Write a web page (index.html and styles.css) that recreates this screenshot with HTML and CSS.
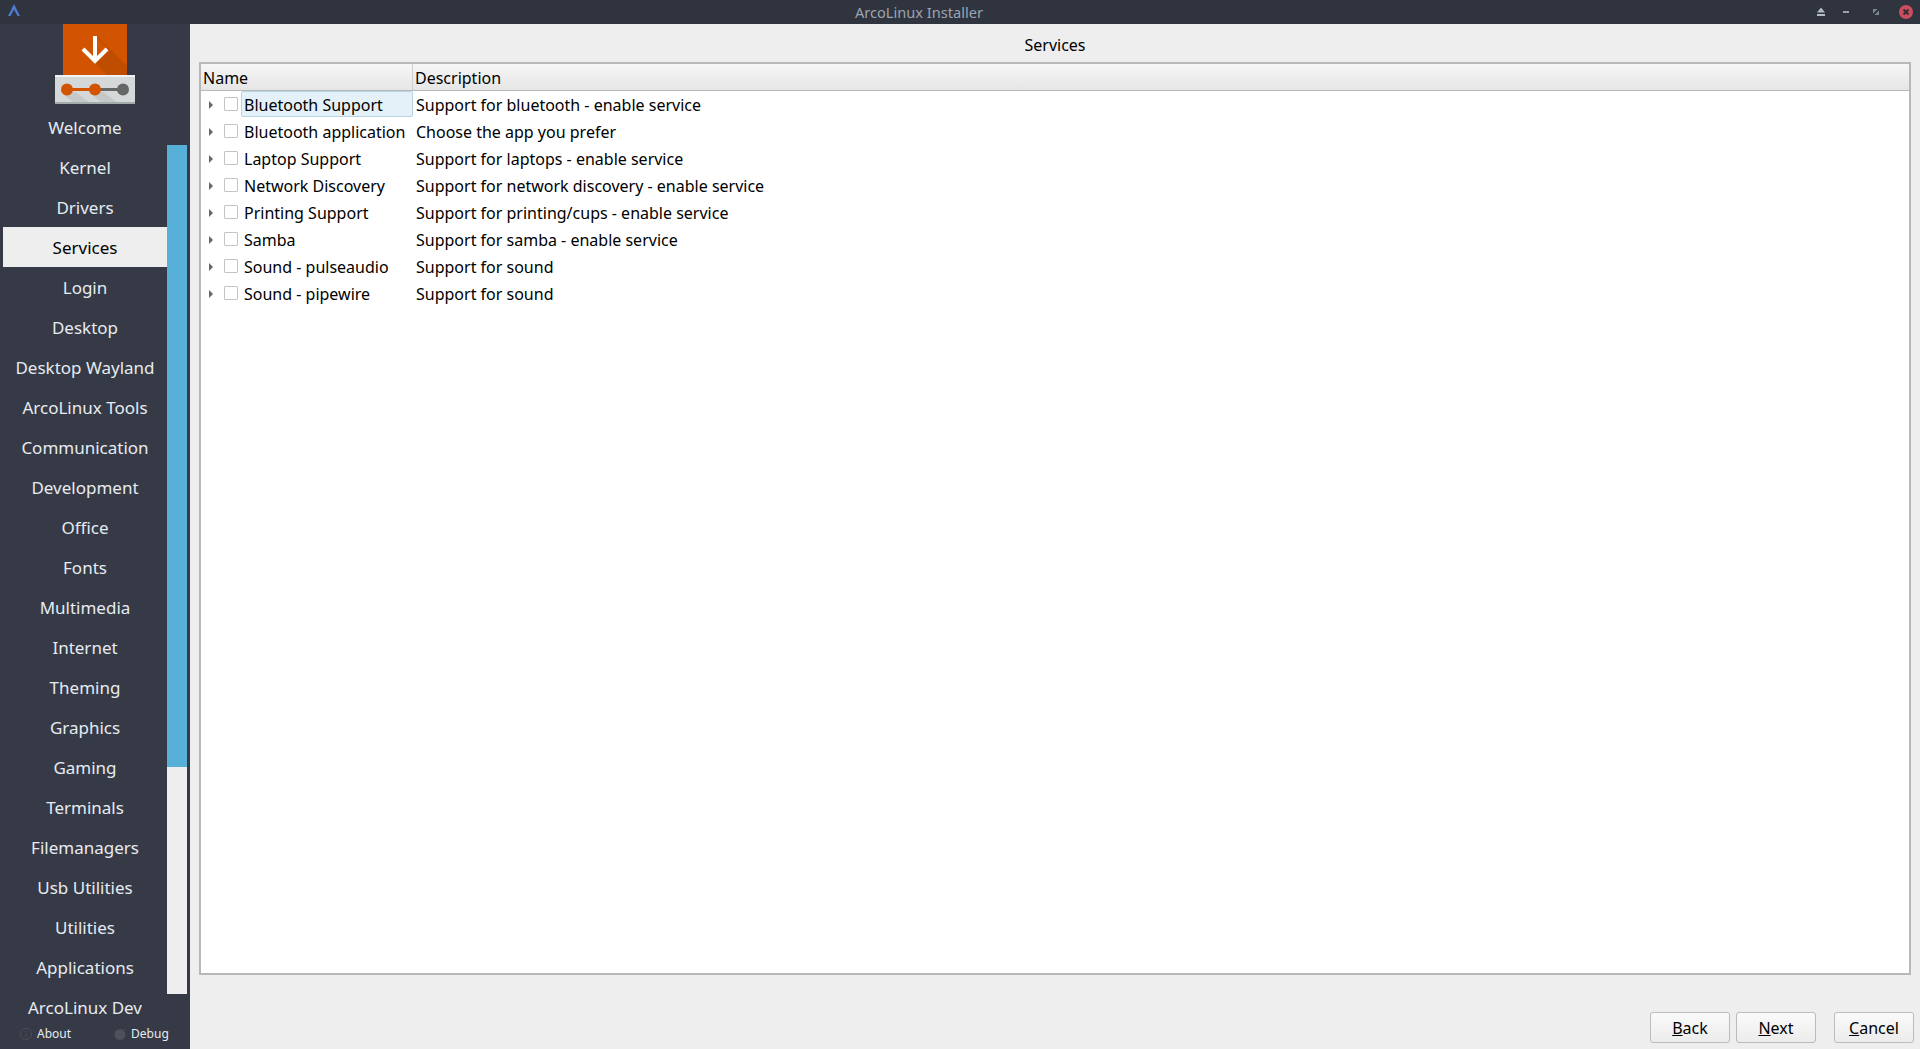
FILE: index.html
```html
<!DOCTYPE html>
<html lang="en">
<head>
<meta charset="utf-8">
<title>ArcoLinux Installer</title>
<link rel="stylesheet" href="styles.css">
</head>
<body>
<div class="app">
  <header class="titlebar">
    <svg class="app-icon" width="14" height="14" viewBox="0 0 14 14"><path d="M7 1 L13 13 H10.500 L7 6.500 L3.500 13 H1 Z" fill="#4f7bd1"/></svg>
    <div class="win-title">ArcoLinux Installer</div>
    <div class="win-controls">
      <svg class="win-btn eject" width="12" height="12" viewBox="0 0 12 12"><path d="M6 1.500 L10 6.500 H2 Z M2 8 H10 V10 H2 Z" fill="#b4bac6"/></svg>
      <svg class="win-btn minim" width="12" height="12" viewBox="0 0 12 12"><rect x="3" y="5" width="6" height="2" fill="#9aa0ad"/></svg>
      <svg class="win-btn maxim" width="12" height="12" viewBox="0 0 12 12"><path d="M3 3 H7.500 L3 7.500 Z M9 4.500 V9 H4.500 Z" fill="#7f8592"/></svg>
      <svg class="win-close" width="14" height="14" viewBox="0 0 14 14"><circle cx="7" cy="7" r="7" fill="#c94f5f"/><path d="M4.500 4.500 L9.500 9.500 M9.500 4.500 L4.500 9.500" stroke="#3a2a33" stroke-width="2"/></svg>
    </div>
  </header>
  <div class="content">
    <aside class="sidebar">
      <div class="sidebar-top">
        <div class="nav-col">
          <div class="logo">
            <svg width="80" height="80" viewBox="0 0 80 80">
              <rect x="8" y="0" width="64" height="51" fill="#d35400"/>
              <path d="M42 12 L72 42 V51 H52 L40 39 L54 26 L42 14 Z" fill="#bf4d00"/>
              <path d="M40 12 V37 M28 25 L40 37 L52 25" fill="none" stroke="#fff" stroke-width="4"/>
              <rect x="0" y="51" width="80" height="29" fill="#d5d8d9"/>
              <path d="M8 70 L18 78 H34 L20 68 Z M36 70 L46 78 H62 L48 68 Z" fill="#c5c8c9"/>
              <rect x="0" y="51" width="80" height="2" fill="#f1f3f3"/>
              <rect x="0" y="78" width="80" height="2" fill="#a2acaa"/>
              <rect x="12" y="64" width="28" height="3" fill="#d35400"/>
              <rect x="40" y="64" width="28" height="3" fill="#666"/>
              <circle cx="12" cy="65.500" r="6" fill="#d35400"/>
              <circle cx="40" cy="65.500" r="6" fill="#d35400"/>
              <circle cx="68" cy="65.500" r="6" fill="#666"/>
            </svg>
          </div>
          <nav class="nav">
            <a class="nav-item">Welcome</a>
            <a class="nav-item">Kernel</a>
            <a class="nav-item">Drivers</a>
            <a class="nav-item active">Services</a>
            <a class="nav-item">Login</a>
            <a class="nav-item">Desktop</a>
            <a class="nav-item">Desktop Wayland</a>
            <a class="nav-item">ArcoLinux Tools</a>
            <a class="nav-item">Communication</a>
            <a class="nav-item">Development</a>
            <a class="nav-item">Office</a>
            <a class="nav-item">Fonts</a>
            <a class="nav-item">Multimedia</a>
            <a class="nav-item">Internet</a>
            <a class="nav-item">Theming</a>
            <a class="nav-item">Graphics</a>
            <a class="nav-item">Gaming</a>
            <a class="nav-item">Terminals</a>
            <a class="nav-item">Filemanagers</a>
            <a class="nav-item">Usb Utilities</a>
            <a class="nav-item">Utilities</a>
            <a class="nav-item">Applications</a>
            <a class="nav-item">ArcoLinux Dev</a>
          </nav>
        </div>
        <div class="scrollbar"><div class="thumb"></div></div>
      </div>
      <div class="side-foot">
        <span class="foot-link">
          <svg width="12" height="12" viewBox="0 0 12 12"><circle cx="6" cy="6" r="5.500" fill="none" stroke="#4a4e59"/><path d="M6 5 V9 M6 3 V4" stroke="#4a4e59"/></svg>
          About
        </span>
        <span class="foot-link debug">
          <svg width="12" height="12" viewBox="0 0 12 12"><circle cx="6" cy="6.500" r="5.500" fill="#4d515b"/><path d="M9 3 L11 1" stroke="#4d515b"/></svg>
          Debug
        </span>
      </div>
    </aside>
    <main class="main">
      <h1 class="page-title">Services</h1>
      <div class="tree">
        <div class="tree-head">
          <div class="col-name head-cell">Name</div>
          <div class="head-cell">Description</div>
        </div>
        <div class="tree-row">
          <span class="arrow"></span><span class="check"></span>
          <span class="name focus">Bluetooth Support</span>
          <span class="desc">Support for bluetooth - enable service</span>
        </div>
        <div class="tree-row">
          <span class="arrow"></span><span class="check"></span>
          <span class="name">Bluetooth application</span>
          <span class="desc">Choose the app you prefer</span>
        </div>
        <div class="tree-row">
          <span class="arrow"></span><span class="check"></span>
          <span class="name">Laptop Support</span>
          <span class="desc">Support for laptops - enable service</span>
        </div>
        <div class="tree-row">
          <span class="arrow"></span><span class="check"></span>
          <span class="name">Network Discovery</span>
          <span class="desc">Support for network discovery - enable service</span>
        </div>
        <div class="tree-row">
          <span class="arrow"></span><span class="check"></span>
          <span class="name">Printing Support</span>
          <span class="desc">Support for printing/cups - enable service</span>
        </div>
        <div class="tree-row">
          <span class="arrow"></span><span class="check"></span>
          <span class="name">Samba</span>
          <span class="desc">Support for samba - enable service</span>
        </div>
        <div class="tree-row">
          <span class="arrow"></span><span class="check"></span>
          <span class="name">Sound - pulseaudio</span>
          <span class="desc">Support for sound</span>
        </div>
        <div class="tree-row">
          <span class="arrow"></span><span class="check"></span>
          <span class="name">Sound - pipewire</span>
          <span class="desc">Support for sound</span>
        </div>
      </div>
      <footer class="actions">
        <button class="btn"><u>B</u>ack</button>
        <button class="btn"><u>N</u>ext</button>
        <button class="btn cancel"><u>C</u>ancel</button>
      </footer>
    </main>
  </div>
</div>
</body>
</html>
```
FILE: styles.css
```css
* { box-sizing: border-box; }
html, body { margin: 0; padding: 0; height: 100%; overflow: hidden; }
body { font-family: "Noto Sans", sans-serif; font-size: 16px; color: #000; background: #eee; }
.app { display: flex; flex-direction: column; height: 1049px; }

.titlebar { height: 24px; flex: none; background: #2f343f; display: flex; align-items: center; padding: 0 7px; }
.app-icon { flex: none; align-self: flex-start; margin-top: 3px; }
.win-title { flex: 1; text-align: center; color: #9da3af; font-size: 14.600px; padding-left: 2px; }
.win-controls { display: flex; align-items: center; flex: none; }
.eject { margin-left: 0; }
.minim { margin-left: 13px; }
.maxim { margin-left: 18px; }
.win-close { margin-left: 17px; }

.content { flex: 1; display: flex; min-height: 0; }

.sidebar { width: 190px; flex: none; background: #363a46; display: flex; flex-direction: column; color: #e6ebf2; }
.sidebar-top { display: flex; flex: 1; min-height: 0; padding-left: 3px; padding-right: 3px; }
.nav-col { width: 164px; flex: none; }
.logo { height: 83px; display: flex; justify-content: center; padding-left: 2px; }
.logo svg { display: block; margin-left: 18px; }
.nav-item { display: flex; align-items: center; justify-content: center; height: 40px; font-size: 17px; padding-top: 1px; }
.nav-item.active { background: #eeeeee; color: #000; }
.scrollbar { width: 20px; flex: none; margin-top: 121px; height: 849px; background: #eeeeee; }
.thumb { height: 622px; background: #56b0d8; }

.side-foot { flex: none; height: 25px; display: flex; font-size: 12px; align-items: center; margin-top: -25px; position: relative; padding: 0 0 6px 20px; }
.foot-link { display: flex; align-items: center; gap: 5px; }
.foot-link.debug { margin-left: 43px; }

.main { flex: 1; min-width: 0; display: flex; flex-direction: column; background: #eeeeee; }
.page-title { margin: 0; height: 38px; flex: none; font-size: 16px; font-weight: 400; text-align: center; line-height: 42px; }
.tree { width: 1712px; height: 913px; flex: none; margin-left: 9px; border: 2px solid #b8b8b8; background: #fff; }
.tree-head { height: 27px; display: flex; background: linear-gradient(#f6f6f6, #e6e6e6); border-bottom: 1px solid #b8b8b8; }
.head-cell { padding-left: 2px; line-height: 29px; }
.col-name { width: 212px; border-right: 1px solid #cfcfcf; }
.tree-row { height: 27px; display: flex; align-items: center; }
.arrow { width: 0; height: 0; margin-left: 8px; border-left: 4px solid #666; border-top: 4px solid transparent; border-bottom: 4px solid transparent; flex: none; }
.check { width: 14px; height: 14px; margin-left: 11px; margin-top: -2px; flex: none; background: #fff; border: 1px solid #c4c4c4; border-radius: 1px; }
.name { width: 172px; height: 27px; margin-left: 3px; padding-left: 3px; line-height: 28px; flex: none; white-space: nowrap; }
.name.focus { border: 1px solid #b5d4e8; background: #e5f1f9; padding-left: 2px; border-radius: 2px; line-height: 26px; height: 26px; margin-top: -1px; }
.desc { padding-left: 3px; white-space: nowrap; }

.actions { flex: 1; display: flex; justify-content: flex-end; align-items: flex-end; padding: 0 6px 6px 0; }
.btn { width: 80px; height: 31px; margin-left: 6px; padding: 0; font: inherit; color: #000; background: linear-gradient(#fafafa, #ececec); border: 1px solid #bcbcbc; border-radius: 3px; }
.btn.cancel { margin-left: 18px; }
```
